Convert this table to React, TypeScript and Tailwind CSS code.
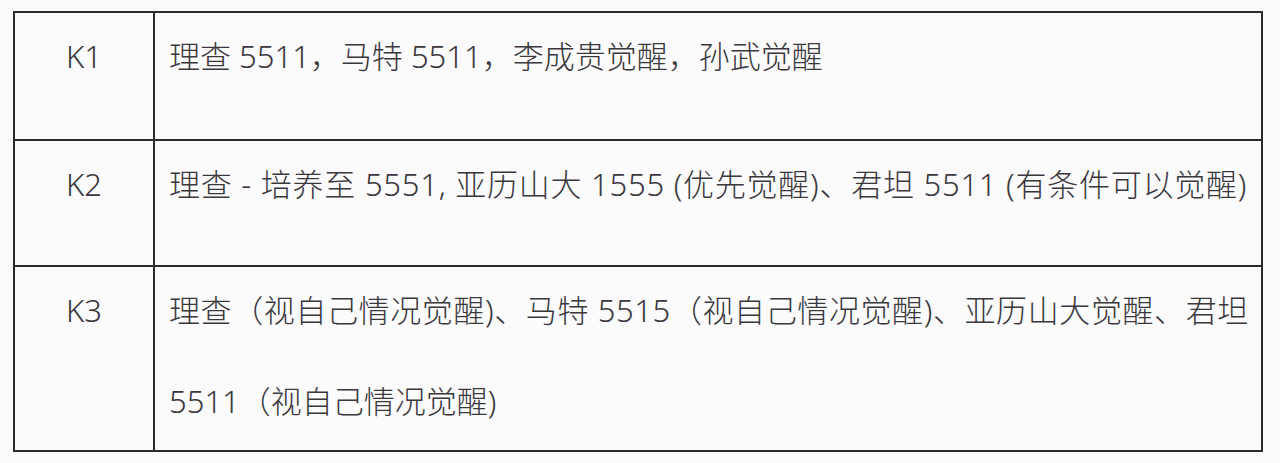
import React from "react";

const rows: { k: string; lines: { t: string; c: string }[]; h: string }[] = [
  { k: "K1", lines: [{ t: "理查 5511，马特 5511，李成贵觉醒，孙武觉醒", c: "" }], h: "h-[128px]" },
  {
    k: "K2",
    lines: [{ t: "理查 - 培养至 5551, 亚历山大 1555 (优先觉醒)、君坦 5511 (有条件可以觉醒)", c: "tracking-[0.75px]" }],
    h: "h-[126px]",
  },
  {
    k: "K3",
    lines: [
      { t: "理查（视自己情况觉醒)、马特 5515（视自己情况觉醒)、亚历山大觉醒、君坦", c: "tracking-[0.6px]" },
      { t: "5511（视自己情况觉醒)", c: "" },
    ],
    h: "h-[185px]",
  },
];

export default function App() {
  return (
    <div
      className="h-[463px] w-[1280px] bg-[#fcfbfc] pl-[13px] pt-[11px] text-[#3a383c]"
      style={{ fontFamily: '"Noto Sans", "Noto Sans CJK SC", sans-serif' }}
    >
      <table className="w-[1250px] border-collapse">
        <tbody>
          {rows.map((r) => (
            <tr key={r.k} className={r.h}>
              <td className="w-[140px] border-2 border-[#2b2b2b] p-0 align-top text-center text-[31px] font-light leading-[91px]">
                <div className="-mt-[2px]">{r.k}</div>
              </td>
              <td className="border-2 border-[#2b2b2b] p-0 pl-[14px] align-top text-[31px] font-light leading-[91px] whitespace-nowrap">
                <div className="-mt-[2px]">
                  {r.lines.map((l, i) => (
                    <div key={i} className={l.c}>
                      {l.t}
                    </div>
                  ))}
                </div>
              </td>
            </tr>
          ))}
        </tbody>
      </table>
    </div>
  );
}
